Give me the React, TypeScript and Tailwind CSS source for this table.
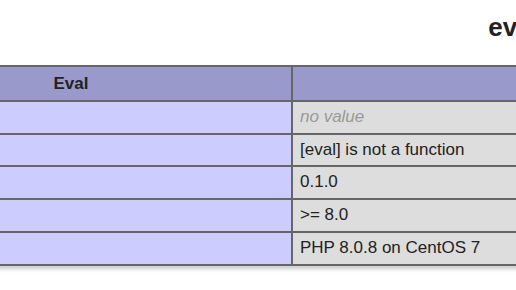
const rows: { value: string; empty?: boolean }[] = [
  { value: "no value", empty: true },
  { value: "[eval] is not a function" },
  { value: "0.1.0" },
  { value: ">= 8.0" },
  { value: "PHP 8.0.8 on CentOS 7" },
];

export default function App() {
  return (
    <div className="h-[290px] w-[516px] overflow-hidden bg-white font-['Liberation_Sans',Arial,sans-serif] text-[#222]">
      <div className="ml-[-151px] w-[1329px] pt-[11.5px]">
        <h2 className="mb-[23.5px] h-[30px] text-center text-[26px] font-bold leading-[30px]">eval</h2>
        <table className="w-full border-collapse text-[17px] shadow-[1px_3px_4px_#ccc]">
          <thead>
            <tr className="bg-[#99c] font-bold">
              <th className="w-[442px] border-2 border-[#666] px-[7px] py-[6px] text-center leading-[21px]">Eval</th>
              <th className="border-2 border-[#666] px-[7px] py-[6px] leading-[21px]"></th>
            </tr>
          </thead>
          <tbody>
            {rows.map((r) => (
              <tr key={r.value}>
                <td className="border-2 border-[#666] bg-[#ccf] px-[7px] py-[5px] font-bold leading-[20.7px]"></td>
                <td className="border-2 border-[#666] bg-[#ddd] px-[7px] py-[5px] text-left leading-[20.7px]">
                  {r.empty ? <i className="text-[#999]">{r.value}</i> : r.value}
                </td>
              </tr>
            ))}
          </tbody>
        </table>
      </div>
    </div>
  );
}
